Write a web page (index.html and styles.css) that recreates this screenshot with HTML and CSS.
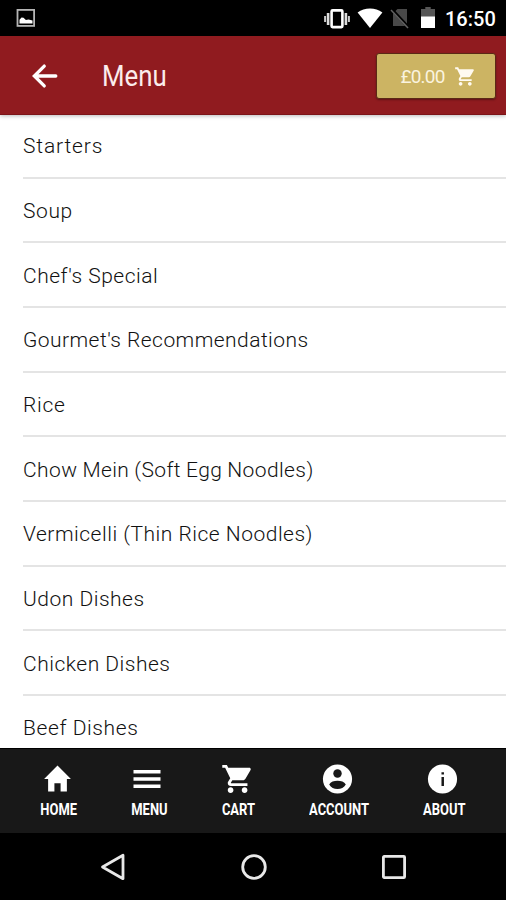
FILE: index.html
```html
<!DOCTYPE html>
<html lang="en">
<head>
<meta charset="utf-8">
<title>Menu</title>
<link rel="stylesheet" href="styles.css">
</head>
<body>
<div class="phone">
  <div class="status">
    <svg class="s-picture" width="20" height="20" viewBox="0 0 20 20"><rect x="1.5" y="1.9" width="16.6" height="16" fill="none" stroke="#b5b5b5" stroke-width="1.8"/><path d="M3.500 15.500v-3.700l2-2.300 2 .3 2.400 2.200 2.600-.6 4 1.200v2.900z" fill="#fff"/></svg>
    <svg class="s-vibrate" width="28" height="22" viewBox="0 0 28 22"><rect x="8.600" y="2.400" width="10.800" height="16.700" rx="1" fill="none" stroke="#fff" stroke-width="2.600"/><path d="M5.100 5v12M22.900 5v12" stroke="#ddd" stroke-width="2.600"/><path d="M2.100 8v6M25.900 8v6" stroke="#ccc" stroke-width="2"/></svg>
    <svg class="s-wifi" width="26" height="20" viewBox="0 0 26 20"><path d="M13 20L.6 4.500Q6 .4 13 .4t12.400 4.100z" fill="#fff"/></svg>
    <svg class="s-sim" width="20" height="21" viewBox="0 0 20 21"><path d="M7.500 1H17v17H3V5.500z" fill="#494949"/><path d="M2 1.500L19 20" stroke="#000" stroke-width="3"/><path d="M1 2l17 18" stroke="#626262" stroke-width="1.500"/></svg>
    <svg class="s-battery" width="14" height="22" viewBox="0 0 14 22"><path d="M4.300 0h5.400v2H14v8H0V2h4.300z" fill="#565656"/><path d="M0 9.500h14V21H0z" fill="#fff"/></svg>
    <span class="clock">16:50</span>
  </div>
  <header class="bar">
    <svg class="back" width="36" height="36" viewBox="0 0 24 24"><path d="M19.200 12H5.400M11.500 5.400L4.900 12l6.600 6.600" fill="none" stroke="#fff" stroke-width="2.200" stroke-linecap="round"/></svg>
    <h1 class="title">Menu</h1>
    <button class="basket"><span class="amount">£0.00</span><svg width="23" height="23" viewBox="0 0 512 512"><use href="#cart"/></svg></button>
  </header>
  <main class="list">
    <div class="row starters">Starters</div>
    <div class="row soup">Soup</div>
    <div class="row">Chef's Special</div>
    <div class="row gourmet">Gourmet's Recommendations</div>
    <div class="row rice">Rice</div>
    <div class="row chow">Chow Mein (Soft Egg Noodles)</div>
    <div class="row">Vermicelli (Thin Rice Noodles)</div>
    <div class="row">Udon Dishes</div>
    <div class="row">Chicken Dishes</div>
    <div class="row beef">Beef Dishes</div>
  </main>
  <nav class="tabs">
    <a class="tab home"><svg width="33" height="33" viewBox="0 0 512 512"><path d="M208 448V320h96v128h97.600V256H464L256 48 48 256h62.400v192z"/></svg><span>HOME</span></a>
    <a class="tab menu"><svg width="36" height="36" viewBox="0 0 512 512"><path d="M64 384h384v-50H64zm0-103h384v-50H64zM64 128v50h384v-50z"/></svg><span>MENU</span></a>
    <a class="tab cart"><svg width="35" height="35" viewBox="0 0 512 512"><path id="cart" d="M169.600 377.600c-22.900 0-41.600 18.700-41.600 41.600s18.700 41.600 41.600 41.600 41.600-18.700 41.600-41.600-18.700-41.600-41.600-41.600zM48 51.200v41.600h41.600l74.900 151.700-31.300 50.900c-3.100 5.200-5.200 12.500-5.200 19.800 0 27.850 19 41.600 44.800 41.600H416v-40H177.900c-3.100 0-5.200-2.100-5.200-5.200 0-1 2.200-5.200 2.200-5.200l20.800-32.800h155c15.600 0 29.100-8.300 36.400-21.800l74.900-128.800c1.200-2.500 2.100-6.200 2.100-10.400 0-11.400-9.400-19.800-20.800-19.800H135.400L115.600 51.200zM374.400 377.600c-22.900 0-41.600 18.700-41.600 41.600s18.700 41.600 41.600 41.600 41.600-18.700 41.600-41.600-18.700-41.600-41.600-41.600z"/></svg><span>CART</span></a>
    <a class="tab account"><svg width="35" height="35" viewBox="0 0 24 24"><circle cx="12" cy="12" r="10"/><circle cx="12" cy="8.200" r="2.900" fill="#181818"/><path d="M6.300 15.700c1-1.900 3.300-2.500 5.700-2.500s4.700.6 5.700 2.500c-1.200 2.100-3.300 3.100-5.700 3.100s-4.500-1-5.700-3.100z" fill="#181818"/></svg><span>ACCOUNT</span></a>
    <a class="tab about"><svg width="35" height="35" viewBox="0 0 24 24"><circle cx="12" cy="12" r="10"/><path d="M11.300 7.300h1.700v1.600h-1.700zm0 3.300h1.700v6.200h-1.700z" fill="#181818"/></svg><span>ABOUT</span></a>
  </nav>
  <div class="system">
    <svg width="28" height="30" viewBox="0 0 28 30"><path d="M3.500 15L24 3.300v23.400z"/></svg>
    <svg width="28" height="30" viewBox="0 0 28 30"><circle cx="14" cy="15" r="11.300"/></svg>
    <svg width="28" height="30" viewBox="0 0 28 30"><rect x="3.400" y="4.400" width="21.200" height="21.200" rx=".8"/></svg>
  </div>
</div>
</body>
</html>
```
FILE: styles.css
```css
* { box-sizing: border-box; }
body { margin: 0; font-family: Roboto, "Liberation Sans", sans-serif; background: #000; }
svg { display: block; flex: none; }
.phone { width: 506px; height: 900px; display: flex; flex-direction: column; overflow: hidden; }

.status { height: 36px; flex: none; background: #000; display: flex; align-items: flex-start; padding: 8px 11px 0 16px; color: #fff; }
.s-vibrate { margin-left: auto; }
.s-wifi { margin-left: 6px; }
.s-sim { margin-left: 7px; }
.s-battery { margin: -1px 10px 0 11px; }
.clock { font-size: 20px; font-weight: 500; line-height: 22px; width: 50px; white-space: nowrap; }

.bar { height: 79px; flex: none; background: #901b1f; display: flex; align-items: center; padding: 2px 10px 0 27px; position: relative; z-index: 1; border-bottom: 1px solid #7c1418; box-shadow: 0 1px 4px rgba(0, 0, 0, .28); }
.title { margin: 0 0 0 39px; font-size: 29px; line-height: 36px; font-weight: 400; color: #fbecec; transform: scaleX(.89); transform-origin: left; }
.basket { margin-left: auto; width: 120px; height: 46px; border: 1px solid #5b2915; border-radius: 3px; background: #ccb463; display: flex; align-items: center; padding: 0 0 0 23px; color: #faf3df; font: 400 19px Roboto, sans-serif; box-shadow: 0 1px 2px rgba(0, 0, 0, .35); }
.basket svg { fill: #fffaf0; margin-left: auto; margin-right: 19px; }
.amount { width: 45px; letter-spacing: -.8px; }

.list { flex: 1; min-height: 0; overflow: hidden; background: #fff; padding-left: 23px; margin-top: -1.200px; }
.row { height: 64.700px; border-bottom: 2px solid #e4e4e4; display: flex; align-items: center; padding-top: 2px; font-size: 21px; font-weight: 300; color: #111; white-space: nowrap; letter-spacing: .5px; }
.starters { letter-spacing: .85px; }
.soup { letter-spacing: .6px; }
.gourmet { letter-spacing: .45px; }
.rice { letter-spacing: .7px; }
.chow { letter-spacing: .4px; word-spacing: -.5px; }
.beef { letter-spacing: .6px; }

.tabs { height: 85px; flex: none; background: #181818; border-top: 1px solid #000; display: flex; position: relative; }
.tab { display: flex; flex-direction: column; align-items: center; padding-top: 12px; color: #fff; font-size: 16px; font-weight: 700; }
.tab svg { fill: #fff; height: 36px; margin-left: -4px; }
.tab span { line-height: 20px; margin-top: 3px; transform: scaleX(.81); }
.home { width: 70px; margin-left: 24px; }
.menu { width: 70px; margin-left: 20px; }
.cart { width: 70px; margin-left: 19px; }
.account { width: 90px; margin-left: 21px; }
.about { width: 80px; margin-left: 20px; }

.system { height: 67px; flex: none; background: #000; display: flex; justify-content: center; gap: 112.500px; padding: 19px 0 0 1px; }
.system svg { fill: none; stroke: #e8e8e8; stroke-width: 2.800; stroke-linejoin: round; }
```
